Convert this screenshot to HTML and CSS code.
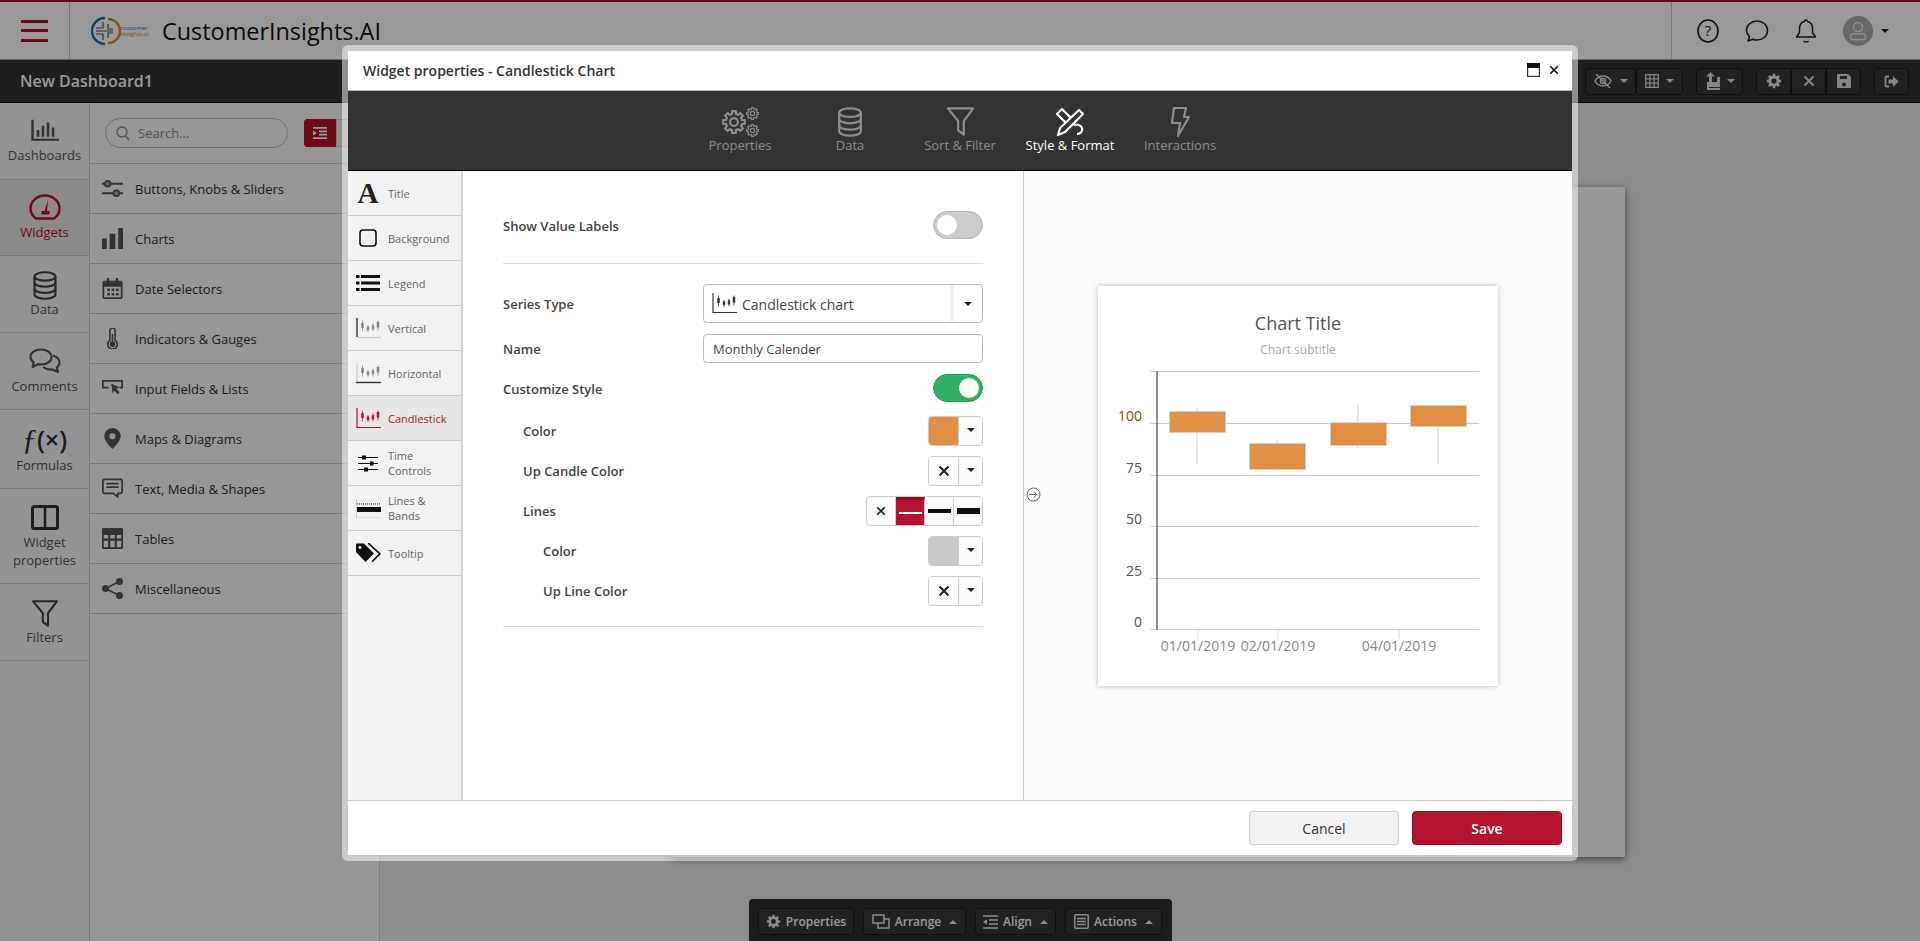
FILE: index.html
```html
<!DOCTYPE html>
<html lang="en">
<head>
<meta charset="utf-8">
<title>CustomerInsights.AI</title>
<link rel="stylesheet" href="styles.css">
</head>
<body>
<svg class="defs" width="0" height="0" aria-hidden="true">
  <symbol id="gear" viewBox="-11 -11 22 22"><path fill-rule="evenodd" d="M7.3,-1.9 9.9,-1.6 9.9,1.6 7.3,1.9 6.5,3.82 8.13,5.87 5.87,8.13 3.82,6.5 1.9,7.3 1.6,9.9 -1.6,9.9 -1.9,7.3 -3.82,6.5 -5.87,8.13 -8.13,5.87 -6.5,3.82 -7.3,1.9 -9.9,1.6 -9.9,-1.6 -7.3,-1.9 -6.5,-3.82 -8.13,-5.87 -5.87,-8.13 -3.82,-6.5 -1.9,-7.3 -1.6,-9.9 1.6,-9.9 1.9,-7.3 3.82,-6.5 5.87,-8.13 8.13,-5.87 6.5,-3.82z M3.6 0a3.6 3.6 0 1 0-7.2 0a3.6 3.6 0 1 0 7.2 0z"/></symbol>
  <symbol id="db" viewBox="0 0 26 32"><g fill="none" stroke="currentColor" stroke-width="2.4"><ellipse cx="13" cy="6" rx="11.5" ry="4.6"/><path d="M1.5 6v20c0 2.6 5.2 4.6 11.5 4.6s11.5-2 11.5-4.6V6"/><path d="M1.5 12.8c0 2.6 5.2 4.6 11.5 4.6s11.5-2 11.5-4.6M1.5 19.6c0 2.6 5.2 4.6 11.5 4.6s11.5-2 11.5-4.6"/></g></symbol>
  <symbol id="funnel" viewBox="0 0 30 32"><path d="M1.5 1.5h27L18.5 15v14.500l-6-4.500V15z" fill="none" stroke="currentColor" stroke-width="2.4" stroke-linejoin="round"/></symbol>
  <symbol id="candles" viewBox="0 0 20 12"><g fill="currentColor"><rect x="2.1" y="0" width=".8" height="11"/><rect x="1.2" y="2.5" width="2.6" height="5"/><rect x="7.6" y="4.5" width=".8" height="7"/><rect x="6.8" y="6" width="2.4" height="3.6"/><rect x="12.6" y="3" width=".8" height="8"/><rect x="11.8" y="4.8" width="2.4" height="4"/><rect x="17.6" y="0" width=".8" height="10"/><rect x="16.7" y="1.5" width="2.6" height="5.5"/></g></symbol>
  <symbol id="x-mark" viewBox="0 0 12 12"><path d="M1.5 1.5l9 9M10.5 1.5l-9 9" stroke="currentColor" stroke-width="2" fill="none"/></symbol>
</svg>

<div class="app">
  <header class="topbar">
    <button class="burger" aria-label="Menu"><span></span><span></span><span></span></button>
    <div class="brand">
      <svg class="logo" viewBox="0 0 58 30" width="58" height="30">
        <path d="M14 2a13 13 0 0 0 0 26" fill="none" stroke="#1f6fa8" stroke-width="2.4"/>
        <path d="M17 3a12 12 0 0 1 0 24" fill="none" stroke="#d88b2c" stroke-width="2.4"/>
        <path d="M12 6v6H5M12 24v-6H5M17 8v5h5M17 22v-5h5M5 15h17" fill="none" stroke="#555" stroke-width="1.2"/>
        <text x="30" y="14" class="logo-t1">customer</text>
        <text x="30" y="20" class="logo-t2">insights.ai</text>
      </svg>
      <span class="brand-name">CustomerInsights.AI</span>
    </div>
    <div class="top-icons">
      <svg width="22" height="26" viewBox="0 0 22 26"><ellipse cx="11" cy="13" rx="10" ry="11" fill="none" stroke="#222" stroke-width="1.6"/><text x="11" y="18" class="q-mark">?</text></svg>
      <svg width="24" height="24" viewBox="0 0 24 24"><path d="M12 2c6 0 10.500 4.200 10.500 9.500S18 21 12 21c-1.500 0-3-.3-4.200-.8L3 22l1.500-4.500C2.700 15.800 1.500 13.800 1.500 11.500 1.500 6.200 6 2 12 2z" fill="none" stroke="#222" stroke-width="1.6" stroke-linejoin="round"/></svg>
      <svg width="22" height="26" viewBox="0 0 22 26"><path d="M11 2a1.500 1.500 0 0 1 1.500 1.500c3.500.8 5 3.600 5 7v4l3 4.500H1.500l3-4.500v-4c0-3.400 1.500-6.200 5-7A1.500 1.500 0 0 1 11 2zM8.500 23c.6 1.200 4.400 1.200 5 0" fill="none" stroke="#222" stroke-width="1.500" stroke-linejoin="round"/></svg>
      <div class="avatar">
        <svg width="30" height="30" viewBox="0 0 30 30"><circle cx="15" cy="15" r="15" fill="#adadad"/><circle cx="15" cy="11" r="4.500" fill="none" stroke="#eee" stroke-width="1.400"/><rect x="7.500" y="18" width="15" height="5.500" rx="2.500" fill="none" stroke="#eee" stroke-width="1.400"/></svg>
        <i class="caret caret-dark"></i>
      </div>
    </div>
  </header>

  <div class="subbar">
    <span class="dash-name">New Dashboard1</span>
    <div class="tools">
      <div class="tool-group">
        <button class="tool tool-drop wide"><svg width="20" height="16" viewBox="0 0 20 16"><circle cx="10" cy="8" r="2.500" fill="none" stroke="#ddd" stroke-width="1.500"/><path d="M2 8c2-3.500 5-5 8-5s6 1.500 8 5c-2 3.500-5 5-8 5S4 11.500 2 8zM3 1l14 14" fill="none" stroke="#ddd" stroke-width="1.500"/></svg><i class="caret"></i></button>
        <button class="tool tool-drop"><svg width="14" height="14" viewBox="0 0 14 14"><path d="M.7.7h12.600v12.600H.7zM4.900.7v12.600M9.100.7v12.600M.7 4.900h12.600M.7 9.100h12.600" fill="none" stroke="#ddd" stroke-width="1.300"/></svg><i class="caret"></i></button>
      </div>
      <div class="tool-group">
        <button class="tool tool-drop"><svg width="15" height="18" viewBox="0 0 15 18"><path d="M4 13V4.500H1L5.500 0 10 4.500H7V10h5V5h3v13H2v-8h2v6h11v-1H4z" fill="#ddd"/></svg><i class="caret"></i></button>
      </div>
      <div class="tool-group joined">
        <button class="tool tool-icon"><svg width="16" height="16" class="solid-gear"><use href="#gear"/></svg></button>
        <button class="tool tool-icon"><svg width="12" height="12" class="tool-x"><use href="#x-mark"/></svg></button>
        <button class="tool tool-icon"><svg width="14" height="14" viewBox="0 0 14 14"><path d="M1 0h10l3 3v10a1 1 0 0 1-1 1H1a1 1 0 0 1-1-1V1a1 1 0 0 1 1-1zm2 2v3h7V2zm4 6.500a2 2 0 1 0 0 4 2 2 0 0 0 0-4z" fill="#ddd" fill-rule="evenodd"/></svg></button>
      </div>
      <div class="tool-group">
        <button class="tool tool-icon tool-exit"><svg width="15" height="13" viewBox="0 0 15 13"><path d="M5 1.500H2.500a1 1 0 0 0-1 1v8a1 1 0 0 0 1 1H5" fill="none" stroke="#ddd" stroke-width="1.800"/><path d="M9 1l5.500 5.500L9 12V8.500H4.500v-4H9z" fill="#ddd"/></svg></button>
      </div>
    </div>
  </div>

  <div class="workspace">
    <nav class="rail">
      <a class="rail-item h76 g5">
        <svg width="28" height="22" viewBox="0 0 28 26" preserveAspectRatio="none"><path d="M1.500 1v23.500H28" fill="none" stroke="#555" stroke-width="2.400"/><path d="M7 13v8M12 8v13M17 4v17M22 10v11" stroke="#555" stroke-width="2.600"/></svg>
        <span>Dashboards</span>
      </a>
      <a class="rail-item h76 active">
        <svg width="32" height="26" viewBox="0 0 32 26"><path d="M7 24.500C3.500 22 1.500 18.500 1.500 14.500a14.500 13 0 0 1 29 0c0 4-2 7.500-5.500 10z" fill="none" stroke="#b5122f" stroke-width="2.400" stroke-linejoin="round"/><path d="M19 6l-1 11h2.500v3.500h-8V17h3z" fill="#b5122f"/></svg>
        <span>Widgets</span>
      </a>
      <a class="rail-item h77 g0">
        <svg width="24" height="29" class="ink"><use href="#db"/></svg>
        <span>Data</span>
      </a>
      <a class="rail-item h77">
        <svg width="32" height="26" viewBox="0 0 32 26"><path d="M12 1.500c6 0 10.500 3.300 10.500 7.500S18 16.500 12 16.500c-1 0-2-.1-3-.3L3.500 19l1.200-4.500C2.600 13 1.500 11.200 1.500 9 1.500 4.800 6 1.500 12 1.500z" fill="none" stroke="#555" stroke-width="2.200" stroke-linejoin="round"/><path d="M24 7.500c3.800 1.300 6.500 3.700 6.500 7 0 2-1 3.800-2.800 5l1.300 4.500-5.500-2.600c-3.500.5-7-.4-9.200-2.400" fill="none" stroke="#555" stroke-width="2.200" stroke-linejoin="round"/></svg>
        <span>Comments</span>
      </a>
      <a class="rail-item h79">
        <span class="fx"><b>ƒ</b>(×)</span>
        <span>Formulas</span>
      </a>
      <a class="rail-item h95">
        <svg width="28" height="25" viewBox="0 0 28 25"><rect x="1.500" y="1.500" width="25" height="22" rx="2" fill="none" stroke="#333" stroke-width="3"/><path d="M14 1v23" stroke="#333" stroke-width="2.600"/></svg>
        <span>Widget<br>properties</span>
      </a>
      <a class="rail-item h77 g0">
        <svg width="28" height="28" class="ink"><use href="#funnel"/></svg>
        <span>Filters</span>
      </a>
    </nav>

    <aside class="panel">
      <div class="panel-search">
        <div class="search">
          <svg width="14" height="15" viewBox="0 0 14 15"><circle cx="6" cy="6" r="5" fill="none" stroke="#888" stroke-width="1.300"/><path d="M9.500 10l3.500 4" stroke="#888" stroke-width="1.300"/></svg>
          <span>Search...</span>
        </div>
        <button class="view-toggle" aria-label="Indent"><svg width="14" height="12" viewBox="0 0 14 12"><path d="M0 0h14v1.800H0zM6 3.400h8v1.800H6zM6 6.800h8v1.800H6zM0 10.200h14V12H0zM0 3.400l4 2.600-4 2.600z" fill="#fff"/></svg></button>
        <button class="view-toggle alt" aria-label="List"></button>
      </div>
      <a class="panel-row"><svg viewBox="0 0 22 18"><path d="M0 4h22M0 14h22" stroke="#555" stroke-width="2.200"/><circle cx="6" cy="4" r="3" fill="#aaa" stroke="#555" stroke-width="1.800"/><circle cx="15" cy="14" r="3" fill="#aaa" stroke="#555" stroke-width="1.800"/></svg><span>Buttons, Knobs &amp; Sliders</span></a>
      <a class="panel-row"><svg viewBox="0 0 22 22"><path d="M0 11h5v11H0zM8 6h6v16H8zM17 0h5v22h-5z" fill="#555"/></svg><span>Charts</span></a>
      <a class="panel-row"><svg viewBox="0 0 22 24"><path d="M1.500 4h19a1 1 0 0 1 1 1v17a1 1 0 0 1-1 1h-19a1 1 0 0 1-1-1V5a1 1 0 0 1 1-1z" fill="none" stroke="#555" stroke-width="2"/><path d="M1 5h20v5H1z" fill="#555"/><path d="M6 0v6M16 0v6" stroke="#555" stroke-width="2.500"/><path d="M5 12h3v3H5zM10 12h3v3h-3zM15 12h3v3h-3zM5 17h3v3H5zM10 17h3v3h-3zM15 17h3v3h-3z" fill="#555"/></svg><span>Date Selectors</span></a>
      <a class="panel-row"><svg viewBox="0 0 22 24"><path d="M8 14V3a3 3 0 0 1 6 0v11a5.500 5.500 0 1 1-6 0z" fill="none" stroke="#555" stroke-width="1.800"/><circle cx="11" cy="18.500" r="3.200" fill="#555"/><path d="M11 18V7" stroke="#555" stroke-width="2"/></svg><span>Indicators &amp; Gauges</span></a>
      <a class="panel-row"><svg viewBox="0 0 25 20"><path d="M8 9H1V1h23v8h-3" fill="none" stroke="#555" stroke-width="2"/><path d="M11 4l10 4.500-4 1.800 4 4.500-2.500 2-3.800-4.500-2 4z" fill="#555"/></svg><span>Input Fields &amp; Lists</span></a>
      <a class="panel-row"><svg viewBox="0 0 20 24"><path fill-rule="evenodd" d="M10 0a9.500 9.500 0 0 1 9.500 9.500C19.500 15 10 24 10 24S.5 15 .5 9.500A9.500 9.500 0 0 1 10 0zm0 6a3.500 3.500 0 1 0 0 7 3.500 3.500 0 0 0 0-7z" fill="#555"/></svg><span>Maps &amp; Diagrams</span></a>
      <a class="panel-row"><svg viewBox="0 0 24 23"><path d="M3 1h18a2 2 0 0 1 2 2v12a2 2 0 0 1-2 2h-3v4l-5-4H3a2 2 0 0 1-2-2V3a2 2 0 0 1 2-2z" fill="none" stroke="#555" stroke-width="2" stroke-linejoin="round"/><path d="M5 6h14M5 10h14" stroke="#555" stroke-width="2"/></svg><span>Text, Media &amp; Shapes</span></a>
      <a class="panel-row"><svg viewBox="0 0 24 24"><path d="M1.500 0h21A1.500 1.500 0 0 1 24 1.500v21a1.500 1.500 0 0 1-1.500 1.500h-21A1.500 1.500 0 0 1 0 22.500v-21A1.500 1.500 0 0 1 1.500 0zM2 8v4h5V8zm7.500 0v4h5V8zM17 8v4h5V8zM2 14.500V22h5v-7.500zm7.500 0V22h5v-7.500zm7.500 0V22h5v-7.500z" fill="#555" fill-rule="evenodd"/></svg><span>Tables</span></a>
      <a class="panel-row"><svg viewBox="0 0 24 24"><path d="M4 12l16-8M4 12l16 8" stroke="#555" stroke-width="2"/><circle cx="4" cy="12" r="4" fill="#555"/><circle cx="20" cy="4" r="4" fill="#555"/><circle cx="20" cy="20" r="4" fill="#555"/></svg><span>Miscellaneous</span></a>
    </aside>

    <main class="canvas"><div class="paper"></div></main>
  </div>

  <div class="dock">
    <button class="dock-btn w96"><svg width="15" height="15" class="solid-gear"><use href="#gear"/></svg>Properties</button>
    <button class="dock-btn w103"><svg width="18" height="15" viewBox="0 0 18 15"><path d="M1 1h11v8H1zM6 9v5h11V5h-5" fill="none" stroke="#e8e8e8" stroke-width="1.500"/></svg>Arrange<i class="caret up"></i></button>
    <button class="dock-btn w81"><svg width="15" height="14" viewBox="0 0 15 14"><path d="M0 1h15M6 5h9M6 9h9M0 13h15" stroke="#e8e8e8" stroke-width="1.600"/><path d="M4 4.500L0 7l4 2.500z" fill="#e8e8e8"/></svg>Align<i class="caret up"></i></button>
    <button class="dock-btn w97"><svg width="15" height="15" viewBox="0 0 15 15"><rect x=".8" y=".8" width="13.400" height="13.400" rx="1" fill="none" stroke="#e8e8e8" stroke-width="1.500"/><path d="M3 4.500h9M3 7.500h9M3 10.500h9" stroke="#e8e8e8" stroke-width="1.500"/></svg>Actions<i class="caret up"></i></button>
  </div>
</div>

<div class="overlay"></div>

<section class="modal">
  <div class="modal-head">
    <h1>Widget properties - Candlestick Chart</h1>
    <div class="win-btns">
      <svg width="13" height="14" viewBox="0 0 13 14"><rect x=".6" y=".6" width="11.800" height="12.800" fill="#fff" stroke="#333" stroke-width="1.200"/><rect x="0" y="0" width="13" height="5" fill="#111"/></svg>
      <svg width="10" height="10" class="win-x"><use href="#x-mark"/></svg>
    </div>
  </div>

  <nav class="steps">
    <a class="step">
      <svg width="37" height="30" viewBox="0 0 37 30" class="step-gears"><use href="#gear" x="0" y="3" width="24" height="24"/><use href="#gear" x="24" y="0" width="13" height="13"/><use href="#gear" x="24" y="17" width="13" height="13"/></svg>
      <span>Properties</span>
    </a>
    <a class="step"><svg width="26" height="30"><use href="#db"/></svg><span>Data</span></a>
    <a class="step"><svg width="29" height="30"><use href="#funnel"/></svg><span>Sort &amp; Filter</span></a>
    <a class="step on">
      <svg width="30" height="30" viewBox="0 0 30 30"><path d="M2 7l5-5 13 13-5 5z" fill="none" stroke="currentColor" stroke-width="2.200" stroke-linejoin="round"/><path d="M24 3l4 4L10 25l-7 3 2-7z" fill="#333" stroke="currentColor" stroke-width="2.200" stroke-linejoin="round"/><path d="M19 18c3-1 7 0 8 3 .8 3-1 6-5 6" fill="none" stroke="currentColor" stroke-width="2.200"/></svg>
      <span>Style &amp; Format</span>
    </a>
    <a class="step"><svg width="20" height="30" viewBox="0 0 20 30"><path d="M4 1h12l-2 9h5L8 29l2-13H2z" fill="none" stroke="currentColor" stroke-width="2.200" stroke-linejoin="round"/></svg><span>Interactions</span></a>
  </nav>

  <div class="modal-body">
    <ul class="side-tabs">
      <li><span class="glyph-a">A</span><span class="lbl">Title</span></li>
      <li><span class="ico"><svg width="18" height="18" viewBox="0 0 18 18"><rect x="1" y="1" width="16" height="16" rx="3" fill="none" stroke="#111" stroke-width="1.600"/></svg></span><span class="lbl">Background</span></li>
      <li><span class="ico"><svg width="24" height="18" viewBox="0 0 24 18"><path d="M0 1h3.500v3H0zM0 7.500h3.500v3H0zM0 14h3.500v3H0zM5 1h19v3H5zM5 7.500h19v3H5zM5 14h19v3H5z" fill="#111"/></svg></span><span class="lbl">Legend</span></li>
      <li><span class="ico"><svg width="25" height="21" viewBox="0 0 25 21"><path d="M1 0v19" stroke="#333" stroke-width="1.400"/><path d="M1 19.500h24" stroke="#ccc" stroke-width="1.200"/><use href="#candles" x="4" y="2" width="20" height="13" class="c-grey"/></svg></span><span class="lbl">Vertical</span></li>
      <li><span class="ico"><svg width="25" height="21" viewBox="0 0 25 21"><path d="M1 0v19" stroke="#ccc" stroke-width="1.200"/><path d="M0 19.500h25" stroke="#333" stroke-width="1.400"/><use href="#candles" x="4" y="2" width="20" height="13" class="c-grey"/></svg></span><span class="lbl">Horizontal</span></li>
      <li class="sel"><span class="ico"><svg width="25" height="21" viewBox="0 0 25 21"><path d="M1 0v19.500h24" fill="none" stroke="#b5122f" stroke-width="1.200"/><use href="#candles" x="4" y="2" width="20" height="13" class="c-red"/></svg></span><span class="lbl">Candlestick</span></li>
      <li><span class="ico"><svg width="20" height="17" viewBox="0 0 20 17"><path d="M0 2.500h20M0 8.500h20M0 14.500h20" stroke="#111" stroke-width="1.200"/><path d="M4 .5h4v4H4zM12 6.500h3.500v4H12zM6 12.500h4v4H6z" fill="#111"/></svg></span><span class="lbl">Time<br>Controls</span></li>
      <li><span class="ico"><svg width="25" height="19" viewBox="0 0 25 19"><path d="M.5 0v19h24" fill="none" stroke="#ccc"/><path d="M1 5h24" stroke="#111" stroke-dasharray="1 1"/><path d="M1 8h24v5H1z" fill="#111"/></svg></span><span class="lbl">Lines &amp;<br>Bands</span></li>
      <li><span class="ico"><svg width="25" height="20" viewBox="0 0 25 20"><path d="M0 1.500a1 1 0 0 1 1-1h7l10 10-8.500 8.500L0 9z" fill="#111"/><circle cx="4" cy="4.500" r="1.400" fill="#f2f2f2"/><path d="M12 .8h1l11 10-8 8" fill="none" stroke="#111" stroke-width="1.600"/></svg></span><span class="lbl">Tooltip</span></li>
    </ul>

    <div class="form">
      <div class="frow r-toggle">
        <label>Show Value Labels</label>
        <span class="switch"></span>
      </div>
      <hr class="sep first">
      <div class="frow r-select">
        <label>Series Type</label>
        <div class="select">
          <svg width="25" height="21" viewBox="0 0 25 21" class="c-dark"><path d="M1 0v19.500h24" fill="none" stroke="#333" stroke-width="1.200"/><use href="#candles" x="4" y="2" width="20" height="13"/></svg>
          <span class="select-val">Candlestick chart</span>
          <span class="select-btn"><i class="caret caret-dark"></i></span>
        </div>
      </div>
      <div class="frow r-input">
        <label>Name</label>
        <div class="input">Monthly Calender</div>
      </div>
      <div class="frow r-cust">
        <label>Customize Style</label>
        <span class="switch on"></span>
      </div>
      <div class="frow r-ctl l1">
        <label>Color</label>
        <div class="picker"><span class="swatch orange"></span><span class="pick-btn"><i class="caret caret-dark"></i></span></div>
      </div>
      <div class="frow r-ctl l1">
        <label>Up Candle Color</label>
        <div class="picker"><span class="swatch"><svg width="12" height="12" class="sw-x"><use href="#x-mark"/></svg></span><span class="pick-btn"><i class="caret caret-dark"></i></span></div>
      </div>
      <div class="frow r-ctl l1">
        <label>Lines</label>
        <div class="segs">
          <span class="seg"><svg width="10" height="10" class="sw-x"><use href="#x-mark"/></svg></span>
          <span class="seg act"><i class="ln l1px"></i></span>
          <span class="seg"><i class="ln l2px"></i></span>
          <span class="seg"><i class="ln l3px"></i></span>
        </div>
      </div>
      <div class="frow r-ctl l2">
        <label>Color</label>
        <div class="picker"><span class="swatch grey"></span><span class="pick-btn"><i class="caret caret-dark"></i></span></div>
      </div>
      <div class="frow r-ctl l2">
        <label>Up Line Color</label>
        <div class="picker"><span class="swatch"><svg width="12" height="12" class="sw-x"><use href="#x-mark"/></svg></span><span class="pick-btn"><i class="caret caret-dark"></i></span></div>
      </div>
      <hr class="sep last">
    </div>

    <div class="preview">
      <svg class="collapse" width="15" height="15" viewBox="0 0 15 15"><circle cx="7.500" cy="7.500" r="6.500" fill="none" stroke="#666"/><path d="M3.500 7.500h7M8 4.800l2.800 2.700L8 10.200" fill="none" stroke="#666"/></svg>
      <div class="chart-card">
        <svg class="chart" width="400" height="400" viewBox="1098 286 400 400">
          <g class="grid">
            <path d="M1150 371.500h329M1150 423.500h329M1150 475.500h329M1150 526.500h329M1150 578.500h329M1150 629.500h329"/>
          </g>
          <path d="M1157 371v259" class="y-axis"/>
          <path d="M1198 630v9M1278 630v9M1399 630v9" class="x-tick"/>
          <path d="M1197 408v56M1277 440v31M1358 403v45M1438 405v59" class="wick"/>
          <rect x="1169.500" y="411.500" width="56" height="21" class="candle"/>
          <rect x="1249.500" y="443.500" width="56" height="26" class="candle"/>
          <rect x="1330.500" y="422.500" width="56" height="23" class="candle"/>
          <rect x="1410.500" y="405.500" width="56" height="21" class="candle"/>
          <text x="1298" y="330" class="c-title">Chart Title</text>
          <text x="1298" y="354" class="c-sub">Chart subtitle</text>
          <text x="1142" y="421" class="y-l amber">100</text>
          <text x="1142" y="473" class="y-l">75</text>
          <text x="1142" y="524" class="y-l">50</text>
          <text x="1142" y="576" class="y-l">25</text>
          <text x="1142" y="627" class="y-l">0</text>
          <text x="1198" y="651" class="x-l">01/01/2019</text>
          <text x="1278" y="651" class="x-l">02/01/2019</text>
          <text x="1399" y="651" class="x-l">04/01/2019</text>
        </svg>
      </div>
    </div>
  </div>

  <footer class="modal-foot">
    <button class="btn cancel">Cancel</button>
    <button class="btn save">Save</button>
  </footer>
</section>
</body>
</html>
```
FILE: styles.css
```css
* { box-sizing: border-box; }
html, body { margin: 0; padding: 0; height: 941px; overflow: hidden; }
body { font-family: "Open Sans", "Noto Sans", sans-serif; color: #333; background: #e9ebee; }
.defs { position: absolute; }
button { font-family: inherit; padding: 0; margin: 0; }
a { color: inherit; text-decoration: none; }
svg { display: block; flex: none; }

.app { height: 941px; display: flex; flex-direction: column; position: relative; }

.caret { display: inline-block; width: 0; height: 0; border-left: 4px solid transparent; border-right: 4px solid transparent; border-top: 4px solid #ddd; }
.caret-dark { border-top-color: #222; }
.caret.up { border-top: 0; border-bottom: 4px solid #e8e8e8; }
.solid-gear { fill: #e8e8e8; }

/* top bar */
.topbar { height: 60px; flex: none; display: flex; align-items: center; background: #fff; border-top: 2px solid #b5122f; border-bottom: 1px solid #aaa; }
.burger { width: 70px; height: 57px; flex: none; border: 0; border-right: 1px solid #ccc; background: none; display: flex; flex-direction: column; justify-content: center; gap: 6.500px; padding-left: 21px; }
.burger span { display: block; width: 27px; height: 3px; background: #b5122f; }
.brand { display: flex; align-items: center; padding-left: 21px; gap: 13px; flex: 1; }
.logo-t1 { font: 6px "Open Sans", sans-serif; fill: #1f6fa8; }
.logo-t2 { font: 6px "Open Sans", sans-serif; fill: #d88b2c; }
.brand-name { font-size: 23.400px; color: #111; line-height: 30px; }
.top-icons { width: 249px; height: 57px; display: flex; align-items: center; border-left: 1px solid #ccc; padding-left: 25px; gap: 26px; }
.q-mark { font: 15px "Open Sans", sans-serif; fill: #222; text-anchor: middle; }
.avatar { display: flex; align-items: center; gap: 8px; }

/* dashboard sub bar */
.subbar { height: 43px; flex: none; display: flex; align-items: center; justify-content: space-between; background: #323232; border-bottom: 1px solid #111; padding: 0 11px 0 20px; }
.dash-name { font-size: 16px; font-weight: 600; color: #fff; }
.tools { display: flex; gap: 13px; }
.tool-group { display: flex; }
.tool { height: 27px; display: flex; align-items: center; justify-content: center; gap: 7px; background: #3a3a3a; border: 1px solid #1c1c1c; border-radius: 4px; }
.tool-drop { padding: 0 7px; min-width: 47px; }
.tool-drop.wide { min-width: 50px; }
.tool-icon { width: 35px; }
.joined .tool { border-radius: 0; }
.joined .tool:first-child { border-radius: 4px 0 0 4px; }
.joined .tool:last-child { border-radius: 0 4px 4px 0; }
.tool-x { color: #ddd; }

/* workspace */
.workspace { flex: 1; display: flex; min-height: 0; }
.rail { width: 90px; flex: none; background: #f6f6f6; border-right: 1px solid #ccc; }
.rail-item { display: flex; flex-direction: column; align-items: center; justify-content: center; gap: 3px; padding-top: 1px; border-bottom: 1px solid #c8c8c8; font-size: 13px; line-height: 18px; color: #555; text-align: center; }
.rail-item.g0 { gap: 0; }
.rail-item.g5 { gap: 5px; }
.h76 { height: 76.500px; }
.h77 { height: 77px; }
.h79 { height: 79px; }
.h95 { height: 95px; }
.rail-item.active { background: #e6e6e6; color: #b5122f; }
.ink { color: #444; }
.fx { font-size: 25px; line-height: 27px; color: #333; font-weight: 600; }
.fx b { font-size: 30px; font-weight: 400; font-family: "Liberation Serif", serif; font-style: italic; }

.panel { width: 290px; flex: none; background: #fafafa; border-right: 1px solid #ccc; }
.panel-search { height: 61px; display: flex; align-items: center; padding-left: 15px; border-bottom: 1px solid #c8c8c8; }
.search { width: 183px; height: 30px; display: flex; align-items: center; gap: 8px; padding-left: 10px; border: 1px solid #bbb; border-radius: 15px; background: #fafafa; font-size: 13px; color: #888; }
.view-toggle { width: 32px; height: 28px; border: 1px solid #b5122f; background: #b5122f; border-radius: 3px 0 0 3px; margin-left: 16px; display: flex; align-items: center; justify-content: center; }
.view-toggle.alt { margin-left: 0; background: #f2f2f2; border-color: #ccc; border-radius: 0 3px 3px 0; }
.panel-row { height: 50px; display: flex; align-items: center; padding-left: 12px; border-bottom: 1px solid #c8c8c8; font-size: 13px; color: #333; }
.panel-row svg { width: 21px; height: 21px; margin-right: 12px; }

.canvas { flex: 1; padding: 84px 0 0 293px; min-width: 0; }
.paper { width: 952px; height: 670px; background: #fbfbfb; box-shadow: 0 2px 8px rgba(0,0,0,.55); }

.dock { position: absolute; left: 749px; bottom: 0; width: 423px; height: 42px; padding: 9px 9px 0; display: flex; gap: 9px; background: #2f2f2f; border-radius: 4px 4px 0 0; }
.dock-btn { height: 27px; display: flex; align-items: center; justify-content: center; gap: 5px; background: #393939; border: 1px solid #1c1c1c; border-radius: 4px; color: #fff; font-size: 12px; font-weight: 600; }
.dock-btn .caret { margin-left: 3px; }
.w96 { width: 96px; }
.w103 { width: 103px; }
.w81 { width: 81px; }
.w97 { width: 97px; }

.overlay { position: absolute; inset: 0; background: rgba(0,0,0,.4); }

/* modal */
.modal { position: absolute; left: 342px; top: 45px; width: 1236px; height: 816px; border: 6px solid rgba(255,255,255,.5); border-radius: 6px; background: #fff; background-clip: padding-box; display: flex; flex-direction: column; }
.modal-head { height: 40px; flex: none; display: flex; align-items: center; justify-content: space-between; padding: 0 13px 1px 15px; background: #fff; border-bottom: 1px solid #bbb; }
.modal-head h1 { margin: 0; font-size: 14px; font-weight: 600; color: #333; }
.win-btns { display: flex; align-items: center; gap: 9px; }
.win-x { color: #111; }

.steps { height: 80px; flex: none; display: flex; justify-content: center; background: #333; border-bottom: 1px solid #000; }
.step { width: 110px; display: flex; flex-direction: column; align-items: center; padding-top: 16px; font-size: 13px; line-height: 18px; color: #8c8c8c; }
.step svg { margin-bottom: -1px; }
.step-gears { fill: none; stroke: currentColor; stroke-width: 2px; }
.step.on { color: #fff; font-weight: 500; }

.modal-body { flex: 1; display: flex; min-height: 0; }
.side-tabs { width: 115px; flex: none; margin: 0; padding: 0; list-style: none; background: #f2f2f2; border-right: 2px solid #d6d6d6; }
.side-tabs li { height: 45px; display: flex; align-items: center; border-bottom: 1px solid #ccc; font-size: 11px; line-height: 15px; color: #666; }
.side-tabs li.sel { background: #e6e6e6; color: #b5122f; }
.ico { width: 40px; flex: none; display: flex; justify-content: center; }
.glyph-a { width: 40px; flex: none; text-align: center; font: bold 29px/1 "Liberation Serif", serif; color: #222; }
.lbl { display: block; }
.c-grey { color: #888; }
.c-red { color: #b5122f; }
.c-dark { color: #333; }

.form { width: 560px; flex: none; padding: 40px 40px 0 40px; }
.frow { display: flex; align-items: center; justify-content: space-between; font-size: 13px; font-weight: 600; color: #444; }
.frow label { display: block; }
.r-toggle { height: 28px; }
.r-toggle label, .r-cust label { margin-top: 2px; }
.sep { margin: 0; height: 1px; border: 0; background: #ddd; }
.sep.first { margin-top: 24px; }
.sep.last { margin-top: 20px; }
.r-select { height: 39px; margin-top: 20px; }
.r-input { height: 29px; margin-top: 11px; }
.r-cust { height: 28px; margin-top: 11px; }
.r-ctl { height: 30px; margin-top: 10px; }
.r-cust + .r-ctl { margin-top: 14px; }
.l1 { padding-left: 20px; }
.l2 { padding-left: 40px; }

.switch { width: 50px; height: 28px; border-radius: 14px; background: #ccc; border: 1px solid #b5b5b5; display: flex; align-items: center; padding: 0 3px; }
.switch::after { content: ""; width: 20px; height: 20px; border-radius: 50%; background: #fff; }
.switch.on { background: #2fb163; border-color: #25a055; justify-content: flex-end; }

.select, .input { width: 280px; border: 1px solid #bbb; border-radius: 4px; font-weight: 400; font-size: 13px; color: #444; background: #fff; display: flex; align-items: center; }
.select { height: 39px; padding-left: 8px; gap: 5px; }
.select-val { flex: 1; font-size: 14px; padding-top: 2px; }
.select-btn { width: 31px; height: 37px; display: flex; align-items: center; justify-content: center; border-left: 2px solid #eee; }
.input { height: 29px; padding-left: 9px; }

.picker { width: 55px; height: 30px; display: flex; border: 1px solid #ccc; border-radius: 4px; overflow: hidden; background: #fafafa; }
.swatch { width: 30px; height: 100%; background: #fff; display: flex; align-items: center; justify-content: center; border-right: 1px solid #ccc; }
.swatch.orange { background: #e08f44; }
.swatch.grey { background: #c8c8c8; }
.pick-btn { flex: 1; display: flex; align-items: center; justify-content: center; }
.pick-btn .caret { margin-top: -2px; }
.sw-x { color: #222; }
.segs { width: 117px; height: 30px; display: flex; border: 1px solid #ccc; border-radius: 4px; overflow: hidden; background: #fafafa; }
.seg { flex: 1; display: flex; align-items: center; justify-content: center; border-right: 1px solid #ccc; }
.seg:last-child { border-right: 0; }
.seg.act { background: #b5122f; border-top: 3px solid #8f0e25; }
.ln { display: block; width: 23px; background: #111; }
.l1px { height: 2px; background: #fff; }
.l2px { height: 4px; }
.l3px { height: 6px; }

.preview { flex: 1; position: relative; display: flex; align-items: center; justify-content: center; background: #fafafa; border-left: 1px solid #ccc; }
.collapse { position: absolute; left: 2px; top: 316px; }
.chart-card { width: 400px; height: 400px; background: #fff; box-shadow: 0 0 5px rgba(0,0,0,.25); }
.chart text { font-family: "Open Sans", sans-serif; }
.grid path { stroke: #c9c9c9; stroke-width: 1; fill: none; }
.y-axis { stroke: #6a6a6a; stroke-width: 1.500; }
.x-tick { stroke: #e4e6f2; stroke-width: 1.500; }
.wick { stroke: #e2e2e2; stroke-width: 1.500; }
.candle { fill: #e08f44; stroke: #d5d0ca; stroke-width: 1; }
.c-title { font-size: 18px; fill: #555; text-anchor: middle; }
.c-sub { font-size: 12px; fill: #aaa; text-anchor: middle; }
.y-l { font-size: 14px; fill: #555; text-anchor: end; }
.y-l.amber { fill: #7a5200; }
.x-l { font-size: 14px; fill: #888; text-anchor: middle; }

.modal-foot { height: 55px; flex: none; display: flex; justify-content: flex-end; align-items: flex-start; padding: 10px 10px 0 0; gap: 13px; background: #fff; border-top: 1px solid #ccc; }
.btn { width: 150px; height: 34px; border-radius: 4px; font-size: 14px; }
.cancel { background: #f2f2f2; border: 1px solid #ccc; color: #333; font-weight: 400; }
.save { background: #b5122f; border: 1px solid #980e27; color: #fff; font-weight: 600; }
```
